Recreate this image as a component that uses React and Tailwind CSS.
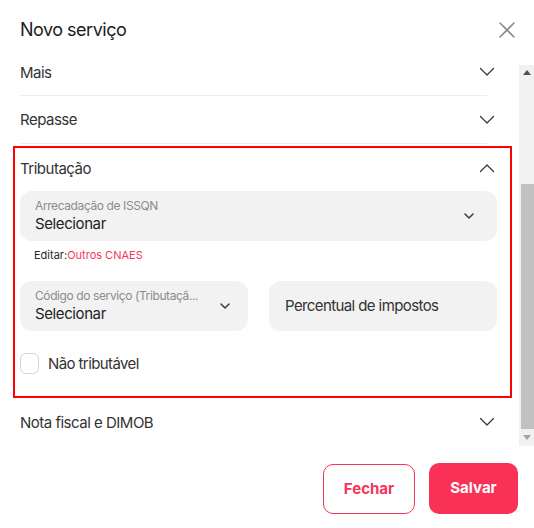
import React from "react";

function Chevron({ up = false, className = "" }) {
  return (
    <svg width="16" height="10" viewBox="0 0 16 10" className={className} fill="none">
      <path
        d={up ? "M1.5 8.5 L8 2 L14.5 8.5" : "M1.5 1.5 L8 8 L14.5 1.5"}
        stroke="#3a3a3a"
        strokeWidth="1.3"
        strokeLinecap="round"
        strokeLinejoin="round"
      />
    </svg>
  );
}

function SmallChevron() {
  return (
    <svg width="12" height="8" viewBox="0 0 12 8" fill="none">
      <path d="M2 2 L6 6 L10 2" stroke="#3a3a3a" strokeWidth="1.5" strokeLinecap="round" strokeLinejoin="round" />
    </svg>
  );
}

function AccRow({ title, up = false, divider = true, h = "h-[47px]" }) {
  return (
    <div className={`flex items-center justify-between ${h} ${divider ? "border-b border-[#ececec]" : ""} mr-[10px]`}>
      <span className="text-[15px] text-[#333333] tracking-[-0.5px] pt-[2px]">{title}</span>
      <Chevron up={up} className="mr-[-8px]" />
    </div>
  );
}

export default function App() {
  return (
    <div
      className="w-[534px] h-[528px] bg-white flex flex-col overflow-hidden"
      style={{ fontFamily: "Inter, 'Noto Sans', sans-serif" }}
    >
      {/* header */}
      <div className="h-[49px] flex items-start justify-between pl-5 pr-[19px] pt-4">
        <h1 className="text-[18px] leading-[28px] text-[#1c1c1c] tracking-[-0.5px]">Novo serviço</h1>
        <svg width="16" height="16" viewBox="0 0 16 16" className="mt-[6px]" fill="none">
          <path d="M1 1 L15 15 M15 1 L1 15" stroke="#8a8a8a" strokeWidth="1.6" strokeLinecap="round" />
        </svg>
      </div>

      {/* body */}
      <div className="flex h-[397px]">
        <div className="flex-1 pl-5 pr-[22px] flex flex-col">
          <AccRow title="Mais" h="h-[47px]" />
          <AccRow title="Repasse" h="h-[48px]" />

          {/* Tributação section */}
          <div className="relative border-b border-[#ececec]">
            <div className="absolute left-[-7px] right-[-15px] top-[2px] bottom-[-1px] border-2 border-[#ff0000] pointer-events-none" />
            <div className="flex items-center justify-between h-[47px] mr-[10px]">
              <span className="text-[15px] text-[#333333] tracking-[-0.5px] pt-[3px]">Tributação</span>
              <Chevron up className="mr-[-8px]" />
            </div>

            <div className="h-[50px] rounded-[12px] bg-[#f2f2f2] flex items-start justify-between pl-[15px] pr-[22px] pt-[7px]">
              <div className="flex flex-col">
                <span className="text-[12px] leading-[16px] text-[#8c8c8c] tracking-[-0.4px]">Arrecadação de ISSQN</span>
                <span className="text-[15px] leading-[20px] text-[#222222] tracking-[-0.4px]">Selecionar</span>
              </div>
              <div className="mt-[14px]">
                <SmallChevron />
              </div>
            </div>

            <div className="pl-[14px] pt-[7px] text-[11px] leading-[14px]">
              <span className="text-[#2a2a2a]">Editar:</span>
              <span className="text-[#f5365c]">Outros CNAES</span>
            </div>

            <div className="grid grid-cols-2 gap-[21px] mt-[19px]">
              <div className="h-[50px] rounded-[12px] bg-[#f2f2f2] flex items-start justify-between pl-[15px] pr-[17px] pt-[7px] min-w-0">
                <div className="flex flex-col min-w-0">
                  <span className="text-[12px] leading-[16px] text-[#8c8c8c] tracking-[-0.4px] whitespace-nowrap">Código do serviço (Tributaçã...</span>
                  <span className="text-[15px] leading-[20px] text-[#222222] tracking-[-0.4px]">Selecionar</span>
                </div>
                <div className="mt-[14px] shrink-0">
                  <SmallChevron />
                </div>
              </div>
              <div className="h-[50px] rounded-[12px] bg-[#f2f2f2] flex items-center pl-[16px]">
                <span className="text-[15px] text-[#333333] tracking-[-0.6px]">Percentual de impostos</span>
              </div>
            </div>

            <div className="flex items-center gap-[9px] mt-[22px] h-[21px] mb-[23px]">
              <div className="w-[19px] h-[21px] rounded-[6px] border border-[#d4d4d4] bg-white" />
              <span className="text-[15px] text-[#333333] tracking-[-0.6px] pt-[2px]">Não tributável</span>
            </div>
          </div>

          <AccRow title="Nota fiscal e DIMOB" divider={false} h="h-[48px]" />
        </div>

        {/* scrollbar */}
        <div className="w-[15px] mt-[16px] h-[381px] bg-[#f1f1f1] flex flex-col items-center">
          <div className="h-[14px] flex items-center justify-center">
            <svg width="8" height="5" viewBox="0 0 8 5"><path d="M0 5 L4 0 L8 5 Z" fill="#505050" /></svg>
          </div>
          <div className="h-[105px]" />
          <div className="w-[13px] ml-[2px] h-[245px] bg-[#c1c1c1]" />
          <div className="flex-1 flex items-center justify-center">
            <svg width="8" height="5" viewBox="0 0 8 5"><path d="M0 0 L8 0 L4 5 Z" fill="#a3a3a3" /></svg>
          </div>
        </div>
      </div>

      {/* footer */}
      <div className="flex justify-end gap-[14px] pr-4 pt-[18px]">
        <button className="w-[92px] h-[50px] rounded-[10px] border border-[#f7345a] bg-white text-[#f7345a] text-[15px] font-bold">
          Fechar
        </button>
        <button className="w-[89px] h-[51px] -mt-px rounded-[10px] bg-[#f93157] text-white text-[15px] font-bold">
          Salvar
        </button>
      </div>
    </div>
  );
}
